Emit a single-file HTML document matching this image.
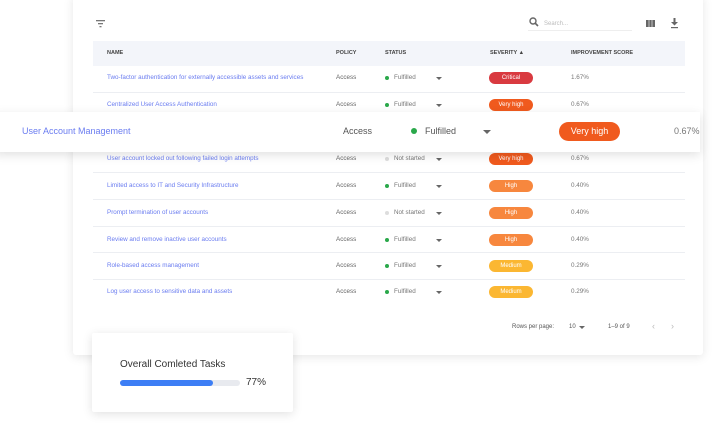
<!DOCTYPE html>
<html><head><meta charset="utf-8"><style>
*{margin:0;padding:0;box-sizing:border-box}
body{width:728px;height:430px;background:#fff;position:relative;overflow:hidden;font-family:"Liberation Sans",sans-serif;line-height:1}
.a{position:absolute;white-space:nowrap;line-height:1}
.card{position:absolute;left:73px;top:-5px;width:630px;height:360px;background:#fff;box-shadow:0 2px 10px rgba(0,0,0,.1);border-radius:3px}
.hdr{position:absolute;left:93px;top:41px;width:592px;height:25px;background:#f3f5fa}
.h{font-size:5.5px;font-weight:bold;color:#444;top:51px}
.n{font-size:6.3px;color:#6a7cf0;left:107px}
.p{font-size:6.3px;color:#666;left:336px}
.s{font-size:6.3px;color:#777;left:394px}
.d{width:4px;height:4px;border-radius:50%;left:385px}
.c{left:436px;width:0;height:0;border-left:3px solid transparent;border-right:3px solid transparent;border-top:3px solid #666}
.pill{left:489px;width:44px;height:12px;border-radius:6px;color:#fff;font-size:6px;text-align:center;line-height:12px}
.sc{font-size:6.3px;color:#777;left:571px}
.ln{position:absolute;left:93px;width:592px;height:1px;background:#eceef2}
</style></head><body>
<div class="card"></div>
<svg class="a" style="left:96px;top:20px" width="10" height="9"><rect x="0" y="0" width="9" height="1.3" fill="#777"/><rect x="2" y="3" width="5" height="1.3" fill="#777"/><rect x="3.5" y="6" width="2" height="1.3" fill="#777"/></svg>
<svg class="a" style="left:529px;top:17px" width="10" height="10"><circle cx="4" cy="4" r="3" fill="none" stroke="#666" stroke-width="1.4"/><line x1="6" y1="6" x2="9" y2="9" stroke="#666" stroke-width="1.6"/></svg>
<div class="a" style="left:544px;top:21px;font-size:6px;color:#bbb">Search...</div>
<div class="a" style="left:528px;top:30px;width:104px;height:1px;background:#eee"></div>
<svg class="a" style="left:646px;top:19px" width="10" height="9"><rect x="0" y="1" width="9" height="7" fill="#666"/><line x1="3" y1="1" x2="3" y2="8" stroke="#fff" stroke-width=".6"/><line x1="6" y1="1" x2="6" y2="8" stroke="#fff" stroke-width=".6"/></svg>
<svg class="a" style="left:670px;top:18px" width="10" height="11"><rect x="3.5" y="0" width="2" height="4" fill="#666"/><path d="M1 4H8L4.5 7.5Z" fill="#666"/><rect x="1" y="9" width="7" height="1.2" fill="#666"/></svg>
<div class="hdr"></div>
<div class="a h" style="left:107px">NAME</div>
<div class="a h" style="left:336px">POLICY</div>
<div class="a h" style="left:385px">STATUS</div>
<div class="a h" style="left:490px">SEVERITY &#9650;</div>
<div class="a h" style="left:571px">IMPROVEMENT SCORE</div>

<div class="ln" style="top:92px"></div>
<div class="ln" style="top:172px"></div>
<div class="ln" style="top:199px"></div>
<div class="ln" style="top:226px"></div>
<div class="ln" style="top:252px"></div>
<div class="ln" style="top:279px"></div>

<div class="a n" style="top:75px">Two-factor authentication for externally accessible assets and services</div>
<div class="a p" style="top:75px">Access</div><div class="a d" style="top:76px;background:#2aa84a"></div><div class="a s" style="top:75px">Fulfilled</div><div class="a c" style="top:77px"></div>
<div class="a pill" style="top:72px;background:#d93a40">Critical</div><div class="a sc" style="top:75px">1.67%</div>

<div class="a n" style="top:102px">Centralized User Access Authentication</div>
<div class="a p" style="top:102px">Access</div><div class="a d" style="top:103px;background:#2aa84a"></div><div class="a s" style="top:102px">Fulfilled</div><div class="a c" style="top:104px"></div>
<div class="a pill" style="top:99px;background:#f05a1e">Very high</div><div class="a sc" style="top:102px">0.67%</div>

<div class="a n" style="top:156px">User account locked out following failed login attempts</div>
<div class="a p" style="top:156px">Access</div><div class="a d" style="top:157px;background:#ddd"></div><div class="a s" style="top:156px">Not started</div><div class="a c" style="top:158px"></div>
<div class="a pill" style="top:153px;background:#f05a1e">Very high</div><div class="a sc" style="top:156px">0.67%</div>

<div class="a n" style="top:183px">Limited access to IT and Security Infrastructure</div>
<div class="a p" style="top:183px">Access</div><div class="a d" style="top:184px;background:#2aa84a"></div><div class="a s" style="top:183px">Fulfilled</div><div class="a c" style="top:185px"></div>
<div class="a pill" style="top:180px;background:#f7873e">High</div><div class="a sc" style="top:183px">0.40%</div>

<div class="a n" style="top:210px">Prompt termination of user accounts</div>
<div class="a p" style="top:210px">Access</div><div class="a d" style="top:211px;background:#ddd"></div><div class="a s" style="top:210px">Not started</div><div class="a c" style="top:212px"></div>
<div class="a pill" style="top:207px;background:#f7873e">High</div><div class="a sc" style="top:210px">0.40%</div>

<div class="a n" style="top:237px">Review and remove inactive user accounts</div>
<div class="a p" style="top:237px">Access</div><div class="a d" style="top:238px;background:#2aa84a"></div><div class="a s" style="top:237px">Fulfilled</div><div class="a c" style="top:239px"></div>
<div class="a pill" style="top:234px;background:#f7873e">High</div><div class="a sc" style="top:237px">0.40%</div>

<div class="a n" style="top:263px">Role-based access management</div>
<div class="a p" style="top:263px">Access</div><div class="a d" style="top:264px;background:#2aa84a"></div><div class="a s" style="top:263px">Fulfilled</div><div class="a c" style="top:265px"></div>
<div class="a pill" style="top:260px;background:#fbb732">Medium</div><div class="a sc" style="top:263px">0.29%</div>

<div class="a n" style="top:289px">Log user access to sensitive data and assets</div>
<div class="a p" style="top:289px">Access</div><div class="a d" style="top:290px;background:#2aa84a"></div><div class="a s" style="top:289px">Fulfilled</div><div class="a c" style="top:291px"></div>
<div class="a pill" style="top:286px;background:#fbb732">Medium</div><div class="a sc" style="top:289px">0.29%</div>

<div class="a" style="left:512px;top:324px;font-size:6px;color:#555">Rows per page:</div>
<div class="a" style="left:569px;top:324px;font-size:6px;color:#555">10</div>
<div class="a c" style="left:579px;top:326px"></div>
<div class="a" style="left:608px;top:324px;font-size:6px;color:#555">1–9 of 9</div>
<div class="a" style="left:652px;top:322px;font-size:9px;color:#bbb">&#8249;</div>
<div class="a" style="left:671px;top:322px;font-size:9px;color:#bbb">&#8250;</div>

<div class="a" style="left:-5px;top:112px;width:705px;height:40px;background:#fff;box-shadow:0 3px 10px rgba(0,0,0,.12)"></div>
<div class="a" style="left:22px;top:127px;font-size:9px;color:#6a7cf0">User Account Management</div>
<div class="a" style="left:343px;top:127px;font-size:9px;color:#555">Access</div>
<div class="a" style="left:411px;top:128px;width:6px;height:6px;border-radius:50%;background:#2aa84a"></div>
<div class="a" style="left:425px;top:127px;font-size:9px;color:#555">Fulfilled</div>
<div class="a" style="left:483px;top:130px;border-left:4px solid transparent;border-right:4px solid transparent;border-top:4px solid #666"></div>
<div class="a" style="left:559px;top:122px;width:61px;height:19px;border-radius:10px;background:#f05a1e;color:#fff;font-size:9px;text-align:center;line-height:19px">Very high</div>
<div class="a" style="left:674px;top:127px;font-size:9px;color:#777">0.67%</div>

<div class="a" style="left:92px;top:333px;width:201px;height:79px;background:#fff;box-shadow:0 2px 10px rgba(0,0,0,.12);border-radius:2px"></div>
<div class="a" style="left:120px;top:360px;font-size:10px;color:#333">Overall Comleted Tasks</div>
<div class="a" style="left:120px;top:380px;width:120px;height:6px;border-radius:3px;background:#e8eaef"></div>
<div class="a" style="left:120px;top:380px;width:93px;height:6px;border-radius:3px;background:#3d7ef5"></div>
<div class="a" style="left:246px;top:378px;font-size:10px;color:#333">77%</div>
</body></html>
